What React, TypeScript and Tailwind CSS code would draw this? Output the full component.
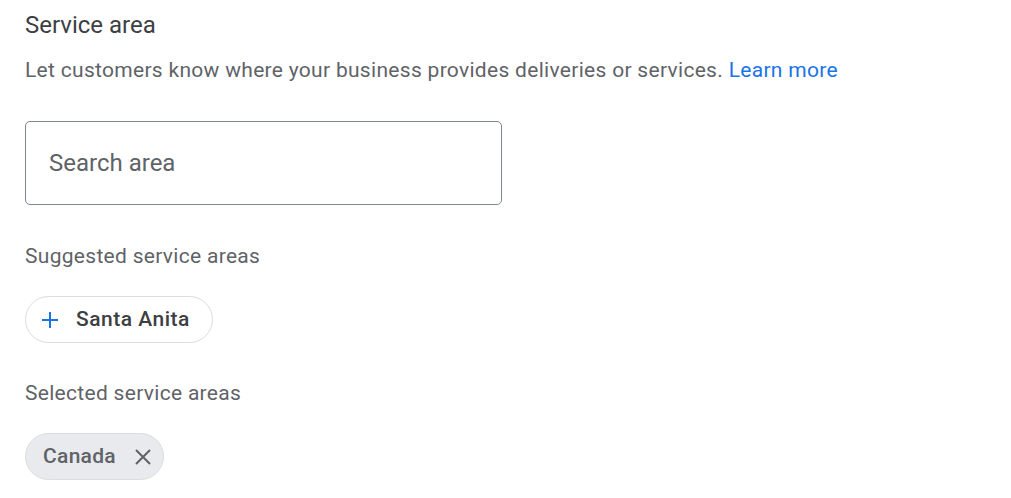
import React from 'react';

const font = { fontFamily: 'Roboto, "Liberation Sans", sans-serif' };

const PlusIcon = () => (
  <svg width="18" height="18" viewBox="0 0 18 18" className="shrink-0">
    <path d="M9 1v16M1 9h16" stroke="#1a73e8" strokeWidth="2" fill="none" />
  </svg>
);

const CloseIcon = () => (
  <svg width="16" height="16" viewBox="0 0 16 16" className="shrink-0">
    <path d="M1 1l14 14M15 1L1 15" stroke="#5f6368" strokeWidth="2" fill="none" />
  </svg>
);

const App: React.FC = () => {
  return (
    <div className="w-[1011px] h-[498px] bg-white px-[25px] pt-[10px] text-[#5f6368]" style={font}>
      <h2 className="text-[24px] leading-[30px] text-[#3c4043]">Service area</h2>
      <p className="mt-[16px] text-[21px] leading-[28px] tracking-[0.3px]">
        Let customers know where your business provides deliveries or services.{' '}
        <a className="text-[#1a73e8]">Learn more</a>
      </p>

      <div className="mt-[37px] w-[477px] h-[84px] rounded-[5px] border border-[#80868b] flex items-center px-[23px]">
        <span className="text-[24px] text-[#5f6368]">Search area</span>
      </div>

      <p className="mt-[37px] text-[21px] leading-[28px] tracking-[0.3px]">Suggested service areas</p>
      <div className="mt-[26px] flex">
        <button className="w-[188px] h-[47px] rounded-full border border-[#dadce0] flex items-center gap-[17px] pl-[15px]">
          <PlusIcon />
          <span className="text-[21px] text-[#3c4043] font-medium tracking-[0.5px]">Santa Anita</span>
        </button>
      </div>

      <p className="mt-[36px] text-[21px] leading-[28px] tracking-[0.3px]">Selected service areas</p>
      <div className="mt-[26px] flex">
        <div className="w-[139px] h-[47px] rounded-full border border-[#dadce0] bg-[#e8eaed] flex items-center gap-[19px] pl-[17px]">
          <span className="text-[21px] text-[#5f6368] font-medium tracking-[0.3px]">Canada</span>
          <CloseIcon />
        </div>
      </div>
    </div>
  );
};

export default App;
